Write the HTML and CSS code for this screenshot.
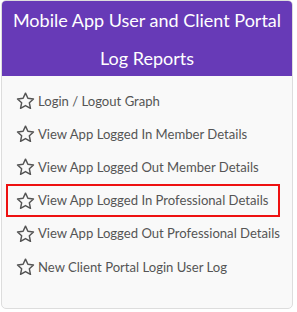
FILE: index.html
```html
<!DOCTYPE html>
<html>
<head>
<meta charset="utf-8">
<link rel="stylesheet" href="styles.css">
</head>
<body>
<div class="panel">
  <div class="panel-head">
    <h3 class="title">Mobile App User and Client Portal Log Reports</h3>
  </div>
  <ul class="list">
    <li class="item"><svg class="star" viewBox="0 0 24 22"><path d="M12 1.5l3.1 6.6 7.2.9-5.3 5 1.4 7.1L12 17.6l-6.4 3.5 1.4-7.1-5.3-5 7.2-.9z"/></svg><span>Login / Logout Graph</span></li>
    <li class="item"><svg class="star" viewBox="0 0 24 22"><path d="M12 1.5l3.1 6.6 7.2.9-5.3 5 1.4 7.1L12 17.6l-6.4 3.5 1.4-7.1-5.3-5 7.2-.9z"/></svg><span>View App Logged In Member Details</span></li>
    <li class="item"><svg class="star" viewBox="0 0 24 22"><path d="M12 1.5l3.1 6.6 7.2.9-5.3 5 1.4 7.1L12 17.6l-6.4 3.5 1.4-7.1-5.3-5 7.2-.9z"/></svg><span>View App Logged Out Member Details</span></li>
    <li class="item highlight"><svg class="star" viewBox="0 0 24 22"><path d="M12 1.5l3.1 6.6 7.2.9-5.3 5 1.4 7.1L12 17.6l-6.4 3.5 1.4-7.1-5.3-5 7.2-.9z"/></svg><span>View App Logged In Professional Details</span></li>
    <li class="item"><svg class="star" viewBox="0 0 24 22"><path d="M12 1.5l3.1 6.6 7.2.9-5.3 5 1.4 7.1L12 17.6l-6.4 3.5 1.4-7.1-5.3-5 7.2-.9z"/></svg><span>View App Logged Out Professional Details</span></li>
    <li class="item"><svg class="star" viewBox="0 0 24 22"><path d="M12 1.5l3.1 6.6 7.2.9-5.3 5 1.4 7.1L12 17.6l-6.4 3.5 1.4-7.1-5.3-5 7.2-.9z"/></svg><span>New Client Portal Login User Log</span></li>
  </ul>
</div>
</body>
</html>
```

FILE: styles.css
```css
* { box-sizing: border-box; }
html, body { margin: 0; padding: 0; background: #fff; }
body { padding: 0 4px 0 1px; font-family: Lato, "Open Sans", sans-serif; }
.panel {
  width: 292px;
  height: 309px;
  background: #f9f9f9;
  border: 1px solid #ddd;
  border-radius: 5px;
  overflow: hidden;
}
.panel-head {
  background: #673ab7;
  height: 76px;
  padding: 1px 8px 0;
  margin: -1px -1px 0;
}
.title {
  margin: 0;
  color: #fff;
  font-weight: 400;
  font-size: 18px;
  line-height: 38px;
  text-align: center;
}
.list {
  list-style: none;
  margin: 0;
  padding: 8px 0 0 4px;
}
.item {
  display: flex;
  align-items: center;
  height: 33.2px;
  width: 274px;
  padding-left: 8px;
  gap: 3px;
  color: #555;
  font-size: 13.1px;
  white-space: nowrap;
  border: 2px solid transparent;
}
.item.highlight { border-color: #ee1111; }
.star {
  width: 19px;
  height: 17px;
  fill: none;
  stroke: #555;
  stroke-width: 1.9;
  stroke-linejoin: round;
  flex: none;
}
```
